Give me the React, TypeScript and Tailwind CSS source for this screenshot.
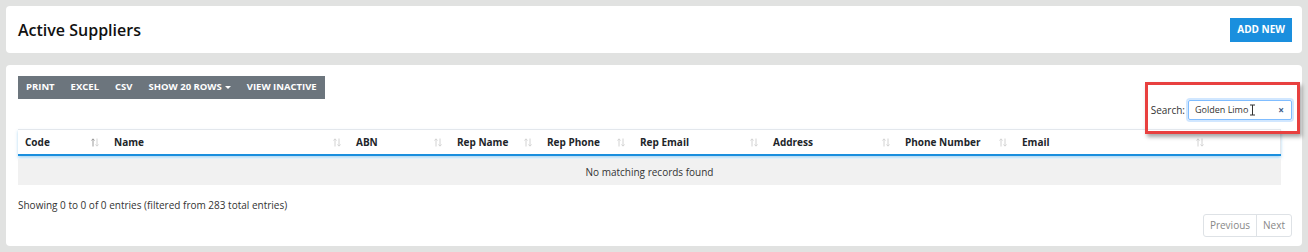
import { ReactNode } from 'react';

const FONT = "font-['Open_Sans','Noto_Sans',sans-serif]";

type Column = {
  label: string;
  width: string;
  active?: boolean;
};

const COLUMNS: Column[] = [
  { label: 'Code', width: 'w-[89px]', active: true },
  { label: 'Name', width: 'w-[242px]' },
  { label: 'ABN', width: 'w-[101px]' },
  { label: 'Rep Name', width: 'w-[90px]' },
  { label: 'Rep Phone', width: 'w-[93px]' },
  { label: 'Rep Email', width: 'w-[133px]' },
  { label: 'Address', width: 'w-[132px]' },
  { label: 'Phone Number', width: 'w-[117px]' },
  { label: 'Email', width: 'w-[197px]' },
];

const TOOLBAR = ['PRINT', 'EXCEL', 'CSV', 'SHOW 20 ROWS', 'VIEW INACTIVE'];

// up / down arrow pair used by the datatable headers
function SortIcon({ active }: { active?: boolean }) {
  const up = active ? '#9a9a9a' : '#d2d2d2';
  return (
    <svg width="8" height="9" viewBox="0 0 8 9" className="mr-[1px]">
      <path d="M2 8.5V1M0.5 2.5L2 0.8L3.5 2.5" stroke={up} strokeWidth="1" fill="none" />
      <path d="M6 0.5V8M4.5 6.5L6 8.2L7.5 6.5" stroke="#d2d2d2" strokeWidth="1" fill="none" />
    </svg>
  );
}

function ToolbarButton({ children }: { children: ReactNode }) {
  return (
    <button className="flex h-full items-center px-[8px] text-[9.5px] font-bold text-white">
      {children}
    </button>
  );
}

export default function App() {
  return (
    <div className={`${FONT} flex h-[252px] w-full flex-col gap-[12px] bg-[#e1e2e1] py-[6px] pl-[6px] pr-[6px]`}>
      <div className="flex h-[47px] items-center justify-between rounded-[4px] bg-white pl-3 pr-[10px]">
        <h1 className="text-[16px] font-semibold text-[#111]">Active Suppliers</h1>
        <button className="flex h-[24px] items-center bg-[#1a8fde] px-[7px] text-[10px] font-bold text-white">
          ADD NEW
        </button>
      </div>

      <div className="relative flex-1 rounded-[4px] bg-white pl-3 pr-[10px] pt-[11px]">
        <div className="flex h-[23px] w-fit items-center bg-[#6c757d]">
          {TOOLBAR.map((label) => (
            <ToolbarButton key={label}>
              {label}
              {label === 'SHOW 20 ROWS' && (
                <span className="ml-[3px] inline-block border-x-[3px] border-t-[3px] border-x-transparent border-t-white" />
              )}
            </ToolbarButton>
          ))}
        </div>

        <div className="mt-[1px] flex items-center justify-end gap-[3px]">
          <span className="text-[10px] text-[#333]">Search:</span>
          <div className="flex h-[20px] w-[104px] items-center justify-between rounded-[2px] border border-[#80bdff] pl-[6px] pr-[7px] shadow-[0_0_0_2px_rgba(0,123,255,0.18)]">
            <span className="flex items-center text-[9px] text-[#333]">
              Golden Limo
              <svg width="7" height="12" viewBox="0 0 7 12" className="ml-[1px]">
                <path d="M1 1h5M3.5 1v10M1 11h5" stroke="#333" strokeWidth="1" fill="none" />
              </svg>
            </span>
            <span className="text-[10px] font-bold text-[#3b5b86]">×</span>
          </div>
        </div>

        <div className="mt-[9px] w-[1263px]">
          <div className="flex h-[27px] border-t border-[#e3e7ec] border-b-2 border-b-[#1a8fde] shadow-[0_2px_3px_rgba(26,143,222,0.35)]">
            {COLUMNS.map((col) => (
              <div key={col.label} className={`${col.width} flex items-center justify-between pl-[7px] pr-[7px]`}>
                <span className="text-[10px] font-bold text-[#212529]">{col.label}</span>
                <SortIcon active={col.active} />
              </div>
            ))}
            <div className="flex-1 border-r border-[#e3e7ec]" />
          </div>
          <div className="mt-[3px] flex h-[26px] items-center justify-center bg-[#f1f1f1] text-[10px] text-[#333]">
            No matching records found
          </div>
        </div>

        <p className="mt-[13px] text-[10px] text-[#333]">
          Showing 0 to 0 of 0 entries (filtered from 283 total entries)
        </p>

        <div className="mt-[1px] flex justify-end">
          <div className="flex h-[23px] rounded-[3px] border border-[#dee2e6] text-[10px] text-[#888]">
            <span className="flex items-center border-r border-[#dee2e6] px-[6px]">Previous</span>
            <span className="flex items-center px-[6px]">Next</span>
          </div>
        </div>

        <div className="absolute left-[1139px] top-[17px] h-[52px] w-[155px] border-[3px] border-[#e8403f] shadow-[2px_3px_4px_rgba(0,0,0,0.35)]" />
      </div>
    </div>
  );
}
